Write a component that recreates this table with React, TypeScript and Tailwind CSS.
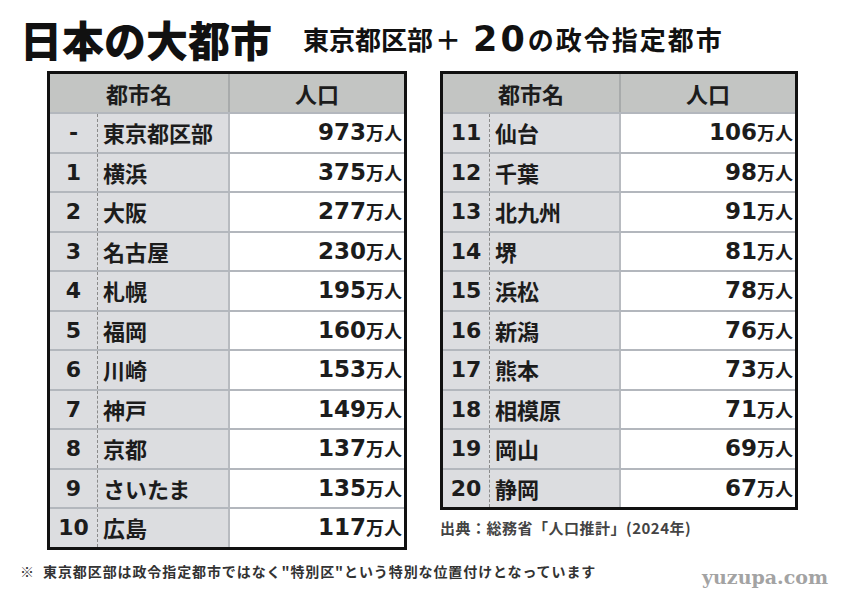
import React from "react";

type Row = [string, string, string];

const leftRows: Row[] = [
  ["-", "東京都区部", "973"],
  ["1", "横浜", "375"],
  ["2", "大阪", "277"],
  ["3", "名古屋", "230"],
  ["4", "札幌", "195"],
  ["5", "福岡", "160"],
  ["6", "川崎", "153"],
  ["7", "神戸", "149"],
  ["8", "京都", "137"],
  ["9", "さいたま", "135"],
  ["10", "広島", "117"],
];

const rightRows: Row[] = [
  ["11", "仙台", "106"],
  ["12", "千葉", "98"],
  ["13", "北九州", "91"],
  ["14", "堺", "81"],
  ["15", "浜松", "78"],
  ["16", "新潟", "76"],
  ["17", "熊本", "73"],
  ["18", "相模原", "71"],
  ["19", "岡山", "69"],
  ["20", "静岡", "67"],
];

const jp = "font-['Noto_Sans_CJK_JP',sans-serif]";
const num = "font-['DejaVu_Sans','Noto_Sans_CJK_JP',sans-serif]";

const CityTable = ({ rows, numW, nameW }: { rows: Row[]; numW: string; nameW: string }) => {
  return (
    <div className="border-[3px] border-[#111] text-[#1c1c1c]">
      {/* header */}
      <div className="flex h-[38px] bg-[#c3c5c3]">
        <div className={`flex items-center justify-center ${jp} text-[22px] font-bold`} style={{ width: `calc(${numW} + ${nameW})` }}>
          都市名
        </div>
        <div className={`flex flex-1 items-center justify-center border-l-2 border-[#a8abab] ${jp} text-[22px] font-bold`}>
          人口
        </div>
      </div>
      {/* rows */}
      {rows.map(([n, name, pop]) => (
        <div key={n + name} className="flex h-[39.5px] border-t-2 border-[#b3b7bd]">
          <div className={`flex items-center justify-center bg-[#dcdde0] ${num} text-[22px] font-bold`} style={{ width: numW }}>
            {n}
          </div>
          <div className={`flex items-center border-l border-dashed border-[#8a8a8a] bg-[#dcdde0] pl-[5px] ${jp} text-[22px] font-bold`} style={{ width: nameW }}>
            {name}
          </div>
          <div className="flex flex-1 items-center justify-end border-l-2 border-[#b8bbc0] bg-white pr-[2px]">
            <span className="leading-none">
              <span className={`${num} text-[23px] font-bold`}>{pop}</span>
              <span className={`${jp} text-[18px] font-bold`}>万人</span>
            </span>
          </div>
        </div>
      ))}
    </div>
  );
};

export default function App() {
  return (
    <div className="relative h-[595px] w-[842px] overflow-hidden bg-white text-[#111]">
      {/* Title */}
      <div className="mt-[18px] flex h-[42px] items-center pl-[20px]">
        <h1 className={`${jp} text-[42px] font-black leading-none`}>日本の大都市</h1>
        <h2 className={`ml-[31px] flex items-center ${jp} text-[26px] font-bold leading-none`}>
          東京都区部
          <span className="ml-[2px]">＋</span>
          <span className={`${num} ml-[12px] text-[35px] font-bold leading-none tracking-[3px]`}>20</span>
          <span className="tracking-[2px]">の政令指定都市</span>
        </h2>
      </div>

      {/* Tables */}
      <div className="mt-[11px] flex items-start pl-[47px]">
        <div className="w-[360px]">
          <CityTable rows={leftRows} numW="47px" nameW="131px" />
        </div>
        <div className="ml-[33px] w-[358px]">
          <CityTable rows={rightRows} numW="46px" nameW="130px" />
          <div className={`mt-[7px] ${jp} text-[15px] font-bold tracking-[0.5px] text-[#444]`}>出典：総務省「人口推計」(2024年)</div>
        </div>
      </div>

      {/* Footnote */}
      <div className="mt-[3px] flex items-center justify-between pl-[20px] pr-[14px]">
        <div className={`${jp} text-[14px] font-bold tracking-[0.9px] text-[#333]`}>
          ※&nbsp;&nbsp;東京都区部は政令指定都市ではなく"特別区"という特別な位置付けとなっています
        </div>
        <div className="mt-[10px] font-['DejaVu_Serif',serif] text-[19px] font-bold text-[#a3a3a3]">yuzupa.com</div>
      </div>
    </div>
  );
}
